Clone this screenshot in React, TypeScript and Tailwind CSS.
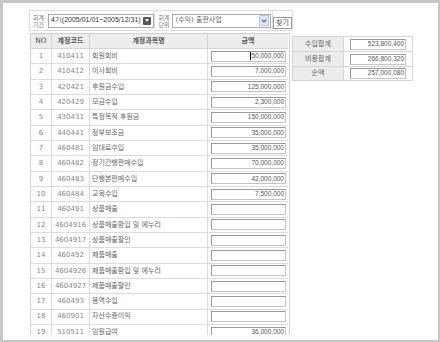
import { ChevronDown } from 'lucide-react';

const rows: [string, string, string][] = [
  ['410411', '회원회비', '50,000,000'],
  ['410412', '이사회비', '7,000,000'],
  ['420421', '후원금수입', '125,000,000'],
  ['420429', '모금수입', '2,300,000'],
  ['430431', '특정목적 후원금', '150,000,000'],
  ['440441', '정부보조금', '35,000,000'],
  ['460481', '임대료수입', '35,000,000'],
  ['460482', '정기간행판매수입', '70,000,000'],
  ['460483', '단행본판매수입', '42,000,000'],
  ['460484', '교육수입', '7,500,000'],
  ['460491', '상품매출', ''],
  ['4604916', '상품매출환입 및 에누리', ''],
  ['4604917', '상품매출할인', ''],
  ['460492', '제품매출', ''],
  ['4604926', '제품매출환입 및 에누리', ''],
  ['4604927', '제품매출할인', ''],
  ['460493', '용역수입', ''],
  ['460901', '자산수증이익', ''],
  ['510511', '임원급여', '36,000,000'],
];

const totals = [
  ['수입합계', '523,800,400'],
  ['비용합계', '266,800,320'],
  ['순액', '257,000,080'],
];

const font = { fontFamily: '"DejaVu Sans", "Noto Sans CJK KR", sans-serif' };
const numFont = { fontFamily: '"Liberation Sans", Arial, sans-serif' };

function Label({ top, bottom }: { top: string; bottom: string }) {
  return (
    <div className="w-[17px] flex flex-col items-center justify-center text-[6px] leading-[7px] text-[#7a7a7a]">
      <span>{top}</span>
      <span>{bottom}</span>
    </div>
  );
}

function AmountBox({ value, focus }: { value: string; focus?: boolean }) {
  return (
    <div
      style={numFont}
      className="h-[11px] w-full border border-[#9a9a9a] border-r-[#c4c4c4] border-b-[#c4c4c4] bg-white flex items-center justify-end pr-[1px] text-[6.5px] text-[#555] leading-none"
    >
      {focus && <span className="w-px h-[8px] bg-black mr-auto ml-[38px]" />}
      {value}
    </div>
  );
}

export default function App() {
  return (
    <div
      style={font}
      className="w-[440px] h-[342px] bg-white border-t-[3px] border-l-[3px] border-r-[2px] border-b-[2px] border-[#c8c8c8] pt-[7px] pl-[26px] overflow-hidden"
    >
      {/* search bar */}
      <div className="flex h-[21px] w-[264px] border border-[#dedede]">
        <Label top="회계" bottom="기간" />
        <div className="w-[108px] flex items-center pl-px">
          <div className="h-[14px] w-[106px] border border-[#a8a8a8] flex items-center pl-[2px] pr-[2px]">
            <span style={numFont} className="text-[7px] text-[#333] flex-1 whitespace-nowrap">
              4기(2005/01/01~2005/12/31)
            </span>
            <span className="w-[8px] h-[8px] rounded-[1px] bg-[#555] flex items-center justify-center">
              <span className="w-0 h-0 border-l-[2.5px] border-r-[2.5px] border-t-[3px] border-l-transparent border-r-transparent border-t-white" />
            </span>
          </div>
        </div>
        <div className="border-l border-[#dedede]" />
        <Label top="회계" bottom="단위" />
        <div className="w-[100px] flex items-center">
          <div className="h-[14px] w-[99px] border border-[#a8a8a8] flex items-center pl-[2px] pr-px">
            <span className="text-[7px] text-[#666] flex-1 whitespace-nowrap">(수익) 출판사업</span>
            <span className="w-[10px] h-[11px] bg-[#dbe6f7] border border-[#b6c8e8] flex items-center justify-center">
              <ChevronDown size={8} strokeWidth={3.5} color="#4d6fb5" />
            </span>
          </div>
        </div>
        <div className="flex-1 border-l border-[#dedede] flex items-center justify-center pt-[5px]">
          <div className="h-[12px] w-[19px] border border-[#9a9a9a] flex items-center justify-center text-[7px] text-[#555]">
            찾기
          </div>
        </div>
      </div>

      <div className="flex items-start mt-[2px]">
        {/* account table */}
        <div className="w-[260px] h-[302px] ml-px border border-b-0 border-[#cfcfcf] pr-px overflow-hidden">
          <div className="flex h-[15px] bg-[#ededed] border-b border-[#d4d4d4] text-[#555]">
            <div className="w-[20px] flex items-center justify-center text-[7.5px]">NO</div>
            <div className="w-[38px] border-l border-[#d4d4d4] flex items-center justify-center text-[7px] font-bold">계정코드</div>
            <div className="w-[118px] border-l border-[#d4d4d4] flex items-center justify-center text-[7px] font-bold">계정과목명</div>
            <div className="flex-1 border-l border-[#d4d4d4] flex items-center justify-center text-[7px] font-bold">금액</div>
          </div>
          {rows.map(([code, name, amount], i) => (
            <div key={code} className="flex h-[15.33px] border-b border-[#dcdcdc] text-[#888]">
              <div className="w-[20px] flex items-center justify-center text-[7px]">{i + 1}</div>
              <div className="w-[38px] border-l border-[#dcdcdc] flex items-center justify-center text-[7px]">{code}</div>
              <div className="w-[118px] border-l border-[#dcdcdc] flex items-center pl-[2px] text-[7px] text-[#666] whitespace-nowrap overflow-hidden">
                {name}
              </div>
              <div className="flex-1 border-l border-[#dcdcdc] flex items-center pl-[3px] pr-[2px]">
                <AmountBox value={amount} focus={i === 0} />
              </div>
            </div>
          ))}
        </div>

        {/* totals */}
        <div className="ml-[2px] mt-[3px] w-[121px] border border-[#d4d4d4]">
          {totals.map(([label, value], i) => (
            <div key={label} className={`flex h-[14.4px] ${i > 0 ? 'border-t border-[#d4d4d4]' : ''}`}>
              <div className="w-[50px] bg-[#ececec] flex items-center justify-center text-[7px] text-[#666]">{label}</div>
              <div className="flex-1 border-l border-[#d4d4d4] flex items-center pl-[6px] pr-[6px]">
                <AmountBox value={value} />
              </div>
            </div>
          ))}
        </div>
      </div>
    </div>
  );
}
